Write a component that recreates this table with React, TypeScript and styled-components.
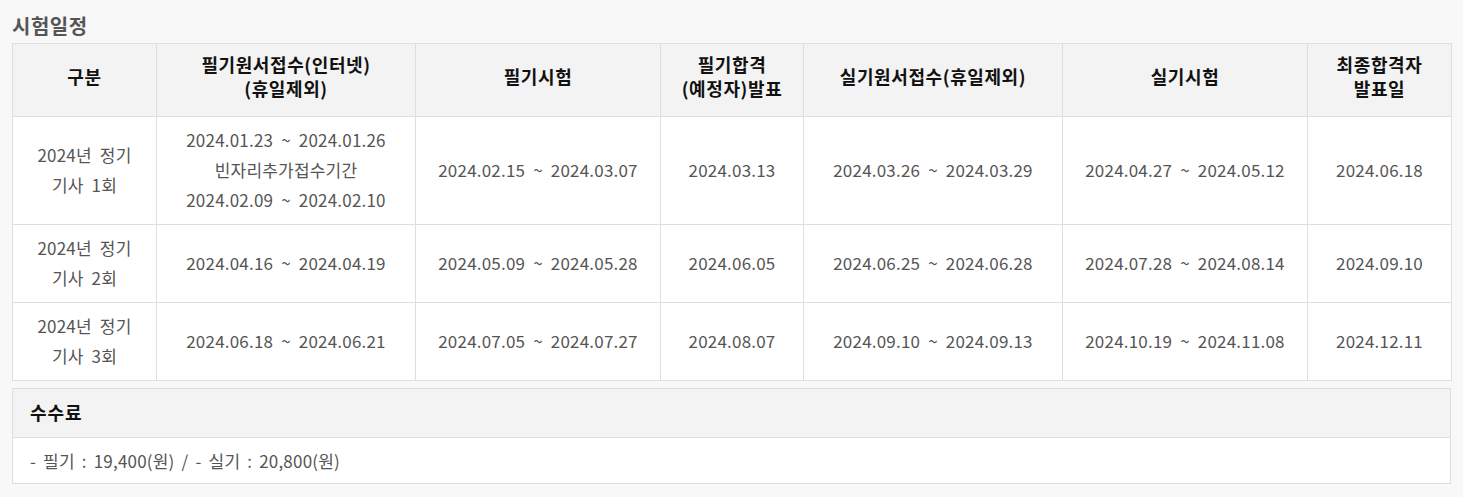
import React from "react";
import styled, { createGlobalStyle } from "styled-components";

const GlobalStyle = createGlobalStyle`
  body {
    margin: 0;
    background: #f8f8f8;
    font-family: "Noto Sans CJK KR", "Noto Sans", sans-serif;
    color: #555;
  }
`;

const Page = styled.div`
  padding: 14px 12px 12px;
`;

const Title = styled.h3`
  margin: 0 0 6px;
  font-size: 20px;
  line-height: 23px;
  letter-spacing: 0.5px;
  font-weight: bold;
  color: #555;
`;

const Table = styled.table`
  width: 100%;
  border-collapse: collapse;
  background: #fff;
  table-layout: fixed;

  th,
  td {
    border: 1px solid #dedede;
    text-align: center;
    vertical-align: middle;
  }

  th {
    background: #f3f3f3;
    color: #111;
    font-size: 18px;
    letter-spacing: 0.6px;
    font-weight: bold;
    line-height: 24px;
    height: 63px;
    padding: 0 6px 9px;
  }

  td {
    color: #555;
    font-size: 17px;
    letter-spacing: 0.2px;
    word-spacing: 4px;
    line-height: 30px;
    padding: 8px 6px 9px;
  }
`;

const FeeBox = styled.div`
  margin-top: 7px;
  border: 1px solid #dedede;
  background: #fff;
`;

const FeeHead = styled.div`
  background: #f3f3f3;
  border-bottom: 1px solid #dedede;
  height: 49px;
  box-sizing: border-box;
  display: flex;
  align-items: center;
  padding: 0 17px 3px;
  font-size: 18px;
  letter-spacing: 1px;
  font-weight: bold;
  color: #111;
`;

const FeeBody = styled.div`
  height: 45px;
  display: flex;
  align-items: center;
  padding: 0 17px;
  font-size: 17px;
  letter-spacing: 0.2px;
  word-spacing: 3px;
  color: #555;
`;

const widths = [144, 259, 245, 143, 259, 245, 144];

const headers = [
  ["구분"],
  ["필기원서접수(인터넷)", "(휴일제외)"],
  ["필기시험"],
  ["필기합격", "(예정자)발표"],
  ["실기원서접수(휴일제외)"],
  ["실기시험"],
  ["최종합격자", "발표일"],
];

const rows: string[][][] = [
  [
    ["2024년 정기", "기사 1회"],
    ["2024.01.23 ~ 2024.01.26", "빈자리추가접수기간", "2024.02.09 ~ 2024.02.10"],
    ["2024.02.15 ~ 2024.03.07"],
    ["2024.03.13"],
    ["2024.03.26 ~ 2024.03.29"],
    ["2024.04.27 ~ 2024.05.12"],
    ["2024.06.18"],
  ],
  [
    ["2024년 정기", "기사 2회"],
    ["2024.04.16 ~ 2024.04.19"],
    ["2024.05.09 ~ 2024.05.28"],
    ["2024.06.05"],
    ["2024.06.25 ~ 2024.06.28"],
    ["2024.07.28 ~ 2024.08.14"],
    ["2024.09.10"],
  ],
  [
    ["2024년 정기", "기사 3회"],
    ["2024.06.18 ~ 2024.06.21"],
    ["2024.07.05 ~ 2024.07.27"],
    ["2024.08.07"],
    ["2024.09.10 ~ 2024.09.13"],
    ["2024.10.19 ~ 2024.11.08"],
    ["2024.12.11"],
  ],
];

const Lines = ({ lines }: { lines: string[] }) => (
  <>
    {lines.map((l, i) => (
      <React.Fragment key={i}>
        {i > 0 && <br />}
        {l}
      </React.Fragment>
    ))}
  </>
);

const App = () => {
  return (
    <Page>
      <GlobalStyle />
      <Title>시험일정</Title>
      <Table>
        <colgroup>
          {widths.map((w, i) => (
            <col key={i} style={{ width: w }} />
          ))}
        </colgroup>
        <thead>
          <tr>
            {headers.map((h, i) => (
              <th key={i}>
                <Lines lines={h} />
              </th>
            ))}
          </tr>
        </thead>
        <tbody>
          {rows.map((r, ri) => (
            <tr key={ri}>
              {r.map((c, ci) => (
                <td key={ci}>
                  <Lines lines={c} />
                </td>
              ))}
            </tr>
          ))}
        </tbody>
      </Table>
      <FeeBox>
        <FeeHead>수수료</FeeHead>
        <FeeBody>- 필기 : 19,400(원) / - 실기 : 20,800(원)</FeeBody>
      </FeeBox>
    </Page>
  );
};

export default App;
